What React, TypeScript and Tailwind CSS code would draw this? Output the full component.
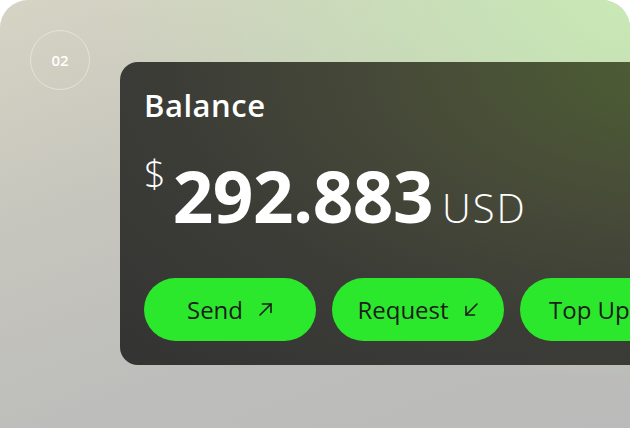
import React from "react";

function ArrowUR() {
  return (
    <svg width="15" height="15" viewBox="0 0 15 15" fill="none" stroke="#1c1c1c" strokeWidth="1.6" strokeLinecap="round" strokeLinejoin="round">
      <path d="M2 13 L13 2" />
      <path d="M4.5 2 H13 V10.5" />
    </svg>
  );
}
function ArrowDL() {
  return (
    <svg width="15" height="15" viewBox="0 0 15 15" fill="none" stroke="#1c1c1c" strokeWidth="1.6" strokeLinecap="round" strokeLinejoin="round">
      <path d="M13 2 L2 13" />
      <path d="M2 4.5 V13 H10.5" />
    </svg>
  );
}

export default function App() {
  const font = { fontFamily: "'Open Sans', Lato, sans-serif" };
  return (
    <div className="w-[630px] h-[428px] bg-white overflow-hidden" style={font}>
      <div className="w-[630px] h-[460px] rounded-t-[28px] bg-[linear-gradient(160deg,#d6d4c4_0%,#c6c5bd_35%,#bdbdbb_65%,#bababa_100%)] relative overflow-hidden">
        <div className="absolute inset-0 bg-[radial-gradient(ellipse_at_100%_0%,rgba(200,235,180,0.95)_0%,rgba(200,235,180,0.5)_30%,rgba(200,235,180,0)_60%)]" />
        <div className="relative flex pl-[30px] pt-[30px]">
          <div className="w-[60px] h-[60px] shrink-0 rounded-full border border-white/40 flex items-center justify-center text-white text-[15px] font-semibold">
            02
          </div>
          <div className="ml-[30px] mt-[32px] w-[560px] shrink-0 rounded-[18px] bg-[radial-gradient(ellipse_at_100%_0%,#4d5f33_0%,#474b38_35%,#3c3c37_65%,#333333_100%)] pl-[24px] pt-[23px] pb-[24px]">
            <div className="text-white text-[31px] font-semibold leading-[40px] tracking-[0.5px]">Balance</div>
            <div className="flex items-baseline mt-[35px] h-[70px] text-white">
              <span className="self-start text-[38px] font-light leading-none -mt-[6px]">$</span>
              <span className="text-[71px] font-bold leading-none ml-[7px] tracking-[-0.5px]">292.883</span>
              <span className="text-[40px] font-light leading-none ml-[9px] tracking-[2px]">USD</span>
            </div>
            <div className="flex gap-[16px] mt-[48px]">
              <button className="w-[172px] h-[63px] shrink-0 rounded-full bg-[#2ce82c] flex items-center justify-center gap-[15px] text-[24px] text-[#1c1c1c]">
                <span>Send</span>
                <ArrowUR />
              </button>
              <button className="w-[172px] h-[63px] shrink-0 rounded-full bg-[#2ce82c] flex items-center justify-center gap-[15px] text-[24px] text-[#1c1c1c]">
                <span>Request</span>
                <ArrowDL />
              </button>
              <button className="w-[172px] h-[63px] shrink-0 rounded-full bg-[#2ce82c] flex items-center justify-start pl-[29px] gap-[15px] text-[24px] text-[#1c1c1c]">
                <span>Top Up</span>
              </button>
            </div>
          </div>
        </div>
      </div>
    </div>
  );
}
